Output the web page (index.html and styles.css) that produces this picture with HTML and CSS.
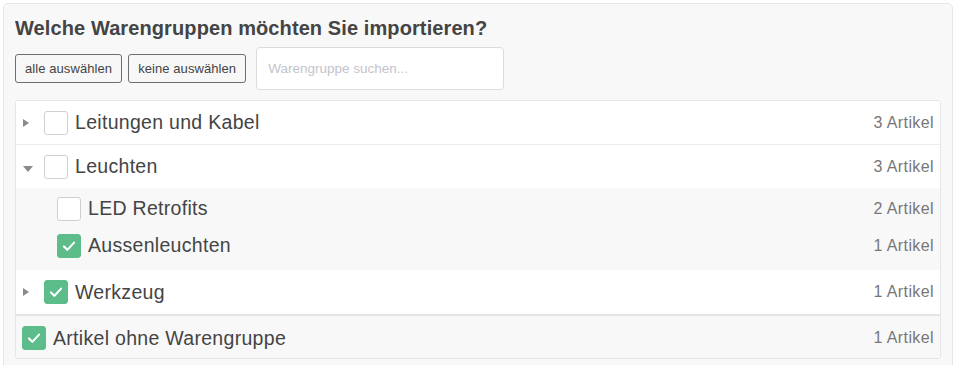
FILE: index.html
```html
<!DOCTYPE html>
<html lang="de">
<head>
<meta charset="utf-8">
<title>Warengruppen importieren</title>
<link rel="stylesheet" href="styles.css">
</head>
<body>
<div class="panel">
  <h2 class="title">Welche Warengruppen möchten Sie importieren?</h2>
  <div class="toolbar">
    <button class="btn">alle auswählen</button>
    <button class="btn">keine auswählen</button>
    <input class="search" type="text" placeholder="Warengruppe suchen...">
  </div>
  <div class="list">
    <div class="row">
      <span class="toggle"><span class="tri-right"></span></span>
      <span class="cb"></span>
      <span class="label">Leitungen und Kabel</span>
      <span class="count">3 Artikel</span>
    </div>
    <div class="row row-open">
      <span class="toggle"><span class="tri-down"></span></span>
      <span class="cb"></span>
      <span class="label">Leuchten</span>
      <span class="count">3 Artikel</span>
    </div>
    <div class="children">
      <div class="child">
        <span class="cb"></span>
        <span class="label">LED Retrofits</span>
        <span class="count">2 Artikel</span>
      </div>
      <div class="child">
        <span class="cb cb-on"><svg viewBox="0 0 24 24"><polyline points="6.5,12.5 10.2,16.2 17.5,8.3"/></svg></span>
        <span class="label">Aussenleuchten</span>
        <span class="count">1 Artikel</span>
      </div>
    </div>
    <div class="row row-last">
      <span class="toggle"><span class="tri-right"></span></span>
      <span class="cb cb-on"><svg viewBox="0 0 24 24"><polyline points="6.5,12.5 10.2,16.2 17.5,8.3"/></svg></span>
      <span class="label">Werkzeug</span>
      <span class="count">1 Artikel</span>
    </div>
    <div class="footer-row">
      <span class="cb cb-on"><svg viewBox="0 0 24 24"><polyline points="6.5,12.5 10.2,16.2 17.5,8.3"/></svg></span>
      <span class="label">Artikel ohne Warengruppe</span>
      <span class="count">1 Artikel</span>
    </div>
  </div>
</div>
</body>
</html>
```

FILE: styles.css
```css
* { box-sizing: border-box; }

body {
  margin: 0;
  background: #ffffff;
  font-family: "Liberation Sans", Arial, sans-serif;
  color: #444444;
}

.panel {
  margin: 3px 0 0 3px;
  width: 950px;
  height: 380px;
  background: #f8f8f9;
  border: 1px solid #e6e6e8;
  border-radius: 5px;
  padding: 13px 11px 0 11px;
}

.title {
  margin: 0;
  font-size: 20px;
  line-height: 22px;
  letter-spacing: 0.1px;
  font-weight: bold;
  color: #444444;
}

.toolbar {
  display: flex;
  align-items: center;
  margin-top: 8px;
  height: 43px;
}

.btn {
  height: 29px;
  padding: 0 9px;
  font-family: "Liberation Sans", Arial, sans-serif;
  font-size: 13px;
  letter-spacing: 0.08px;
  color: #444444;
  background: #f7f7f8;
  border: 1px solid #6e6e6e;
  border-radius: 3px;
  margin-right: 6px;
}

.btn + .btn { margin-right: 10px; }

.search {
  width: 248px;
  height: 43px;
  border: 1px solid #dcdce0;
  border-radius: 4px;
  background: #ffffff;
  padding: 0 11px;
  font-family: "Liberation Sans", Arial, sans-serif;
  font-size: 13.5px;
  outline: none;
}

.search::placeholder { color: #c3c3cc; }

.list {
  margin-top: 10px;
  width: 926px;
  background: #ffffff;
  border: 1px solid #e6e6e8;
  border-radius: 3px;
  overflow: hidden;
}

.row, .child, .footer-row {
  display: flex;
  align-items: center;
  padding: 0 6px 0 6px;
}

.row {
  height: 44px;
  border-bottom: 1px solid #ededef;
  background: #ffffff;
}

.row-open { border-bottom: none; height: 43px; }

.row-last { height: 45px; border-bottom: 1px solid #e2e2e5; }

.toggle {
  width: 22px;
  flex: none;
  display: flex;
  align-items: center;
  padding-left: 1px;
}

.tri-right {
  width: 0;
  height: 0;
  border-left: 6px solid #8a8a8a;
  border-top: 4.5px solid transparent;
  border-bottom: 4.5px solid transparent;
  margin-left: 0;
}

.tri-down {
  width: 0;
  height: 0;
  border-top: 6px solid #8a8a8a;
  border-left: 5px solid transparent;
  border-right: 5px solid transparent;
  margin-top: 5px;
}

.cb {
  width: 24px;
  height: 24px;
  flex: none;
  border: 1px solid #d0d0d4;
  border-radius: 3px;
  background: #ffffff;
  display: flex;
  align-items: center;
  justify-content: center;
}

.cb-on {
  background: #5cbd8b;
  border-color: #5cbd8b;
}

.cb svg {
  width: 22px;
  height: 22px;
}

.cb svg polyline {
  fill: none;
  stroke: #ffffff;
  stroke-width: 2.3;
  stroke-linecap: round;
  stroke-linejoin: round;
}

.label {
  flex: 1;
  margin-left: 7px;
  font-size: 19.5px;
  letter-spacing: 0.3px;
  color: #444444;
}

.count {
  font-size: 16px;
  letter-spacing: 0.4px;
  color: #777777;
}

.children {
  background: #f8f8f9;
  padding: 2px 0 6px 0;
}

.child {
  height: 37px;
  padding-left: 41px;
}

.footer-row {
  height: 43px;
  padding-top: 2px;
  background: #f8f8f9;
  border-top: 1px solid #e6e6e8;
}
```
